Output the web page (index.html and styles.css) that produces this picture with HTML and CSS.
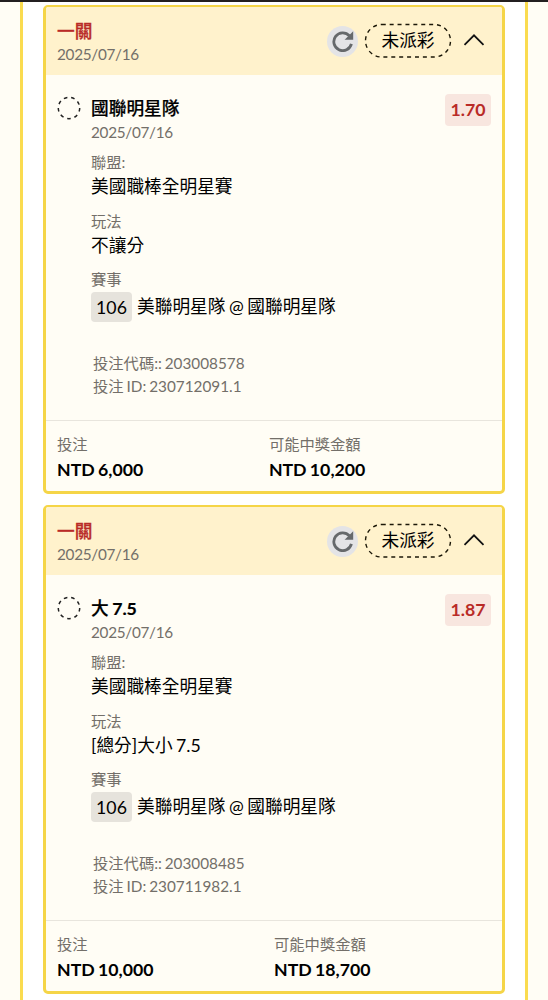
FILE: index.html
```html
<!DOCTYPE html>
<html lang="zh-Hant">

<head>
  <meta charset="utf-8">
  <title>投注紀錄</title>
  <link rel="stylesheet" href="styles.css">
</head>

<body>
  <div class="topbar"></div>
  <div class="list">
    <div class="card">
      <div class="card-head">
        <div class="head-text">
          <h4>一關</h4>
          <p class="gray date">2025/07/16</p>
        </div>
        <span class="refresh">
          <svg width="22" height="22" viewBox="0 0 22 22">
            <path class="arc" d="M17.4 5.8A8.9 8.9 0 1 0 19.4 13.8"/>
            <path class="tip" d="M21.2 1.2V9.8H12.6z"/>
          </svg>
        </span>
        <span class="status">
          <svg width="88" height="36" viewBox="0 0 88 36">
            <rect x="1.5" y="1.5" width="85" height="32.5" rx="16.25"/>
          </svg>
          未派彩
        </span>
        <svg class="arrow" width="22" height="14" viewBox="0 0 22 14">
          <path d="M1.5 11.8L11 2.3L20.5 11.8"/>
        </svg>
      </div>
      <div class="card-body">
        <svg class="ring" width="24" height="24" viewBox="0 0 24 24">
          <circle cx="12" cy="12" r="10.7"/>
        </svg>
        <div class="info">
          <h5>國聯明星隊</h5>
          <p class="gray date">2025/07/16</p>
          <dl>
            <dt>聯盟:</dt>
            <dd>美國職棒全明星賽</dd>
            <dt>玩法</dt>
            <dd>不讓分</dd>
            <dt>賽事</dt>
            <dd class="match"><span class="no">106</span>美聯明星隊 @ 國聯明星隊</dd>
          </dl>
          <div class="code">
            <p>投注代碼:: 203008578</p>
            <p>投注 ID: 230712091.1</p>
          </div>
        </div>
        <span class="odds">1.70</span>
      </div>
      <div class="card-foot">
        <div>
          <p class="gray">投注</p>
          <p class="money">NTD 6,000</p>
        </div>
        <div>
          <p class="gray">可能中獎金額</p>
          <p class="money">NTD 10,200</p>
        </div>
      </div>
    </div>

    <div class="card">
      <div class="card-head">
        <div class="head-text">
          <h4>一關</h4>
          <p class="gray date">2025/07/16</p>
        </div>
        <span class="refresh">
          <svg width="22" height="22" viewBox="0 0 22 22">
            <path class="arc" d="M17.4 5.8A8.9 8.9 0 1 0 19.4 13.8"/>
            <path class="tip" d="M21.2 1.2V9.8H12.6z"/>
          </svg>
        </span>
        <span class="status">
          <svg width="88" height="36" viewBox="0 0 88 36">
            <rect x="1.5" y="1.5" width="85" height="32.5" rx="16.25"/>
          </svg>
          未派彩
        </span>
        <svg class="arrow" width="22" height="14" viewBox="0 0 22 14">
          <path d="M1.5 11.8L11 2.3L20.5 11.8"/>
        </svg>
      </div>
      <div class="card-body">
        <svg class="ring" width="24" height="24" viewBox="0 0 24 24">
          <circle cx="12" cy="12" r="10.7"/>
        </svg>
        <div class="info">
          <h5>大 <b>7.5</b></h5>
          <p class="gray date">2025/07/16</p>
          <dl>
            <dt>聯盟:</dt>
            <dd>美國職棒全明星賽</dd>
            <dt>玩法</dt>
            <dd>[總分]大小 7.5</dd>
            <dt>賽事</dt>
            <dd class="match"><span class="no">106</span>美聯明星隊 @ 國聯明星隊</dd>
          </dl>
          <div class="code">
            <p>投注代碼:: 203008485</p>
            <p>投注 ID: 230711982.1</p>
          </div>
        </div>
        <span class="odds">1.87</span>
      </div>
      <div class="card-foot">
        <div>
          <p class="gray">投注</p>
          <p class="money">NTD 10,000</p>
        </div>
        <div>
          <p class="gray">可能中獎金額</p>
          <p class="money">NTD 18,700</p>
        </div>
      </div>
    </div>
  </div>
</body>

</html>
```

FILE: styles.css
```css
* {
  margin: 0;
  padding: 0;
  box-sizing: border-box;
}

body {
  height: 1000px;
  overflow: hidden;
  background: #fffdf5;
  color: #000;
  font-family: Lato, "Noto Sans CJK TC", sans-serif;
  font-size: 17.7px;
  line-height: 24px;
  word-spacing: -1px;
}

.topbar {
  height: 2px;
  background: #231f20;
}

.list {
  width: 508px;
  height: 998px;
  margin-left: 20px;
  padding: 3px 20px 0;
  background: #fff;
  border: 3px solid #fadb4f;
  border-width: 0 3px;
}

.card {
  height: 489px;
  margin-bottom: 11px;
  overflow: hidden;
  background: #fffdf5;
  border: 3px solid #f5d547;
  border-top-width: 2px;
  border-radius: 5px;
}

.card-head {
  display: flex;
  align-items: center;
  height: 68px;
  padding: 0 17px 0 11px;
  background: #fff2cc;
}

.head-text {
  flex: 1;
  padding-top: 3px;
}

h4 {
  font-size: 17.7px;
  font-weight: 500;
  line-height: 23px;
  color: #b92b27;
  -webkit-text-stroke: .3px #b92b27;
}

h5 {
  font-size: 17.7px;
  font-weight: 500;
  line-height: 24px;
  -webkit-text-stroke: .2px #000;
}

.gray,
dt,
.code {
  font-size: 15.3px;
  line-height: 23px;
  color: #736f69;
}

.date {
  letter-spacing: -.3px;
}

.refresh {
  display: flex;
  align-items: center;
  justify-content: center;
  width: 31px;
  height: 31px;
  margin-right: 6px;
  background: #e4e4e6;
  border-radius: 50%;
}

.arc {
  fill: none;
  stroke: #66696b;
  stroke-width: 2.8;
}

.tip {
  fill: #66696b;
}

.status {
  position: relative;
  width: 88px;
  height: 36px;
  line-height: 35px;
  text-align: center;
}

.status svg {
  position: absolute;
  top: 0;
  left: 0;
}

.status rect {
  fill: none;
  stroke: #1c1808;
  stroke-width: 1.4;
  stroke-dasharray: 4 3.9;
}

.arrow {
  margin: -2px 0 0 11px;
}

.arrow path {
  fill: none;
  stroke: #111;
  stroke-width: 1.8;
}

.card-body {
  display: flex;
  align-items: flex-start;
  height: 345px;
  padding: 20px 11px 0;
}

.ring {
  margin: 1px 10px 0 0;
}

.ring circle {
  fill: none;
  stroke: #222;
  stroke-width: 1.5;
  stroke-dasharray: 3.6 3.87;
}

.info {
  flex: 1;
  padding-top: 2px;
}

dl {
  padding-top: 7px;
}

dt {
  height: 23px;
}

dd {
  height: 26px;
  margin-bottom: 9.5px;
  line-height: 26px;
}

.match {
  display: flex;
  height: 31px;
  line-height: 32px;
}

.no {
  width: 41px;
  height: 30px;
  margin: 1px 5px 0 0;
  background: #e6e3dc;
  border-radius: 4px;
  line-height: 31px;
  text-align: center;
}

.code {
  padding: 20px 0 0 2px;
}

.odds {
  width: 46px;
  height: 32px;
  margin-top: -1px;
  background: #f8e6df;
  border-radius: 4px;
  color: #b92b27;
  font-weight: bold;
  line-height: 32px;
  text-align: center;
}

.card-foot {
  display: flex;
  height: 71px;
  padding: 12px 11px 0;
  border-top: 1px solid #e8e5dd;
}

.card-foot div {
  flex: 1 1 auto;
}

.money {
  font-weight: bold;
  line-height: 28px;
}
```
